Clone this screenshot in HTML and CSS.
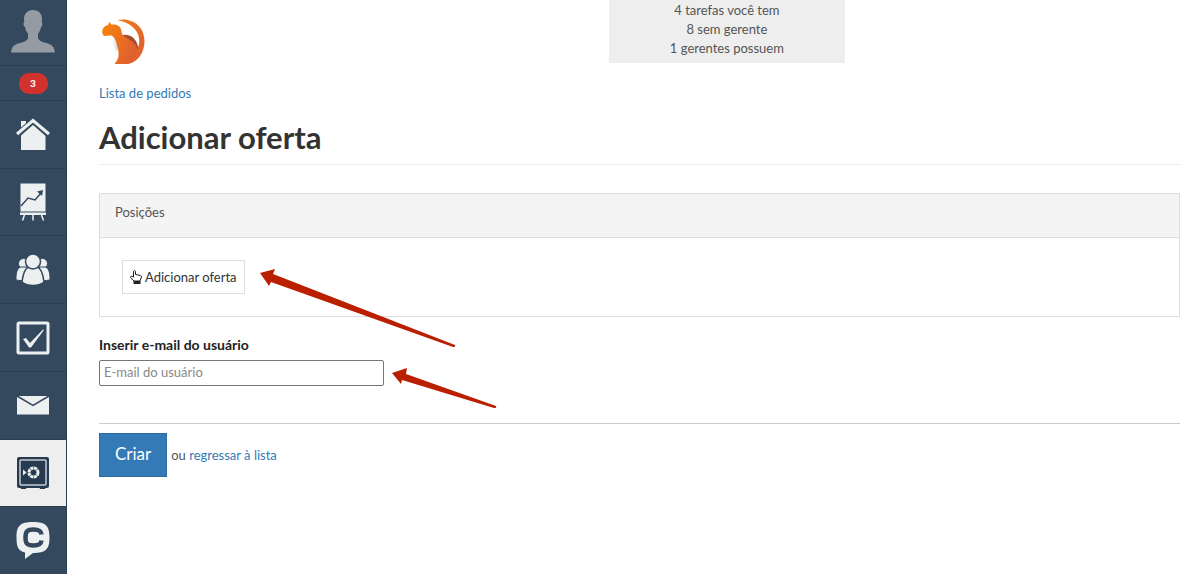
FILE: index.html
```html
<!DOCTYPE html>
<html lang="pt">
<head>
  <meta charset="UTF-8">
  <meta name="viewport" content="width=device-width, initial-scale=1.0">
  <title>Adicionar oferta</title>
  <link rel="stylesheet" href="styles.css">
</head>
<body>
  <nav class="sidebar">
    <a href="#" class="avatar" aria-label="Perfil">
      <svg width="44" height="44" viewBox="0 0 44 44"><path fill="#959ba2" d="M22 0c6 0 9 4 9 9 0 1 0 2-.3 3 1.300 1 1 4-.7 5-.5 3-1.500 5-3 6.500V28c1 3 4 4 8 5 6 1.500 8 3 9 9.500H0C1 36 3 34.500 9 33c4-1 7-2 8-5v-4.500c-1.500-1.500-2.500-3.500-3-6.500-1.700-1-2-4-.7-5-.3-1-.3-2-.3-3 0-5 3-9 9-9z"/></svg>
    </a>
    <a href="#" class="counter"><span class="badge">3</span></a>
    <a href="#" class="item" aria-label="Início">
      <svg width="34" height="34" viewBox="0 0 34 34" fill="#ecf0f1"><path d="M5 4h5v3L5 11z"/><path d="M17 6l12.500 11v16H5V17z"/><path d="M1 18L17 4l16 14" fill="none" stroke="#34495e" stroke-width="6"/><path d="M1 17L17 3.500 33 17" fill="none" stroke="#ecf0f1" stroke-width="3"/></svg>
    </a>
    <a href="#" class="item" aria-label="Estatísticas">
      <svg width="34" height="40" viewBox="0 0 34 40"><path fill="#ecf0f1" d="M4.500 1.500h25v28h-25zM4 30.500h26v2.500H4z"/><path d="M5 24l7-8 7 2 6-7" fill="none" stroke="#34495e" stroke-width="1.500"/><path fill="#34495e" d="M21 9.500l6-1.500-1 6z"/><path d="M8.500 33L6.500 38.500M17 33v5.500M25.500 33l2 5.500" stroke="#ecf0f1" stroke-width="1.500"/></svg>
    </a>
    <a href="#" class="item" aria-label="Clientes">
      <svg width="34" height="34" viewBox="0 0 34 34" fill="#ecf0f1" stroke="#34495e"><circle cx="7.500" cy="10.500" r="5"/><circle cx="26.500" cy="10.500" r="5"/><path d="M0 26c0-6 1-11 5-12h6l-3 14-8-1zM34 26c0-6-1-11-5-12h-6l3 14 8-1z"/><path stroke-width="1.500" d="M6 29c1-8 3-14 7-15h8c4 1 6 7 7 15-6 4.500-16 4.500-22 0z"/><circle cx="17" cy="8.500" r="7.500" stroke-width="1.500"/></svg>
    </a>
    <a href="#" class="item" aria-label="Tarefas">
      <svg width="34" height="34" viewBox="0 0 34 34"><rect x="2" y="2" width="30" height="30" rx="1" fill="none" stroke="#ecf0f1" stroke-width="3"/><path fill="#ecf0f1" d="M7 18l3-1 4 5L27 8.500 28 9 15 26.500h-2z"/></svg>
    </a>
    <a href="#" class="item" aria-label="Mensagens">
      <svg width="34" height="34" viewBox="0 0 34 34"><path fill="#ecf0f1" d="M1 8h32v18.500H1z"/><path d="M1 8l16 9.500L33 8" fill="none" stroke="#34495e" stroke-width="1.500"/></svg>
    </a>
    <a href="#" class="item active" aria-label="Pedidos">
      <svg width="34" height="34" viewBox="0 0 34 34"><path fill="#263a50" d="M4 30h7l-1 3H5zM23 30h7l-1 3h-5z"/><rect x="1" y="1" width="32" height="31" rx="2" fill="#263a50"/><rect x="4" y="4" width="26" height="25" rx="1" fill="none" stroke="#c5ccd2" stroke-width="1.500"/><path fill="#ecf0f1" d="M7 13.500l3.500 3L7 19.500z"/><circle cx="17.500" cy="16.500" r="4.500" fill="none" stroke="#ecf0f1" stroke-width="3" stroke-dasharray="3 0.530"/></svg>
    </a>
    <a href="#" class="item" aria-label="Chat">
      <svg width="34" height="38" viewBox="0 0 34 38"><path fill="#ecf0f1" d="M17 0c13 0 16.500 4 16.500 15.500S30 31 17 31l-8 6v-6.500C2 29 .5 25 .5 15.500.5 4 4 0 17 0z"/><path d="M25.500 12.500c-.5-4-3-5-8-5-6.500 0-8 2-8 8s1.500 8 8 8c5 0 7.500-1 8-5" fill="none" stroke="#34495e" stroke-width="4.500"/></svg>
    </a>
  </nav>

  <main class="content">
    <header class="top">
      <a href="#" class="logo" aria-label="Página inicial">
        <svg width="46" height="46" viewBox="0 0 46 46">
          <defs>
            <linearGradient id="fur" x1="0" y1="0" x2="1" y2="0.500"><stop offset="0" stop-color="#fb8608"/><stop offset="1" stop-color="#df5f31"/></linearGradient>
            <linearGradient id="tail" x1="0" y1="0" x2="1" y2="1"><stop offset="0" stop-color="#f37a17"/><stop offset="1" stop-color="#de5d32"/></linearGradient>
            <linearGradient id="shade"><stop offset="0" stop-color="#fff"/><stop offset="1" stop-color="#ccc"/></linearGradient>
          </defs>
          <path fill="url(#shade)" d="M11 16c0 8 2 14 5 18l3-12z"/>
          <path fill="url(#tail)" d="M16 2C32-1 43.500 9 43.500 23 43.500 36 35 46 25 46l5-10c7-3 9-9 8-16C37 11 28 4 16 2z"/>
          <path fill="#a54a2c" d="M22 17c8-1 14 4 15.500 14L30 32z"/>
          <path fill="url(#fur)" d="M8.500 4l2 2.500c6-.5 9.500 2 10 7 .3 4 3 5 7 7.500 5 3 8.500 6 9 11C36 40 31 46 25 46H13.500c4-5 5-9 3.500-15-1.500-5-2-10-5.500-13-3-1-6 0-8.500 0C1 16 .5 13 2 10.500c1-2 3-3 5-3.500z"/>
        </svg>
      </a>
      <div class="summary">
        <div>4 tarefas você tem</div>
        <div>8 sem gerente</div>
        <div>1 gerentes possuem</div>
      </div>
    </header>

    <a href="#" class="back">Lista de pedidos</a>
    <h1>Adicionar oferta</h1>

    <form>
      <section class="panel">
        <div class="panel-heading">Posições</div>
        <div class="panel-body">
          <div class="pointed">
            <button type="button" class="btn-add">
              <svg width="12" height="14" viewBox="0 0 12 14"><path fill="#fff" stroke="#222" stroke-linejoin="round" d="M3.500 7V1.500c0-1.200 2-1.200 2 0v3l5 1c.8.200 1 .8 1 1.500L10 11H4L.8 8C0 7 1 5.800 2 6.400z"/><path fill="#222" d="M3.500 11h7v3h-7z"/></svg>
              Adicionar oferta
            </button>
            <svg class="arrow" width="196" height="80" viewBox="0 0 196 80"><path fill="#ba2000" d="M0 5l15-4-2 5 182 71q1 2-2 2L11 14l-2 4z"/></svg>
          </div>
        </div>
      </section>

      <label for="email">Inserir e-mail do usuário</label>
      <div class="pointed">
        <input type="email" id="email" placeholder="E-mail do usuário">
        <svg class="arrow" width="105" height="42" viewBox="0 0 105 42"><path fill="#ba2000" d="M0 5l15-5-1 6 90 32q1 2-2 2L10 12l-1 4z"/></svg>
      </div>

      <div class="actions">
        <button type="submit" class="btn-create">Criar</button>
        <span>ou <a href="#">regressar à lista</a></span>
      </div>
    </form>
  </main>
</body>
</html>
```
FILE: styles.css
```css
* {
  box-sizing: border-box;
}

body {
  margin: 0;
  display: flex;
  min-height: 100vh;
  background: #fff;
  color: #555;
  font-family: Lato, "Open Sans", sans-serif;
  font-size: 13px;
  line-height: 19px;
}

a {
  color: #337ab7;
  text-decoration: none;
}

button,
input {
  font: inherit;
}

svg {
  display: block;
}

/* Sidebar */
.sidebar {
  display: flex;
  flex-direction: column;
  width: 67px;
  flex-shrink: 0;
  background: #34495e;
  border-right: 1px solid #2c4057;
}

.sidebar a {
  display: flex;
  align-items: center;
  justify-content: center;
  border-bottom: 1px solid #2b3e50;
}

.sidebar .avatar {
  height: 66px;
  padding-bottom: 2px;
}

.sidebar .counter {
  height: 35px;
}

.badge {
  width: 29px;
  border-radius: 10px;
  background: #d2322d;
  color: #fff;
  font-size: 10px;
  font-weight: 900;
  line-height: 21px;
  text-align: center;
}

.sidebar .item {
  flex: 1;
  max-height: 68px;
}

.sidebar .item:last-child {
  border-bottom: 0;
}

.sidebar .active {
  background: #eee;
}

/* Page */
.content {
  flex: 1;
  padding: 0 20px 0 32px;
}

.top {
  display: flex;
  align-items: flex-start;
  justify-content: space-between;
}

.logo {
  padding: 18px 0 0 2px;
}

.summary {
  width: 236px;
  margin-right: 31%;
  padding: 1px 0 5px;
  background: #eee;
  text-align: center;
}

.back {
  display: block;
  margin-top: 20px;
}

h1 {
  margin: 15px 0 28px;
  padding-bottom: 7px;
  border-bottom: 1px solid #eee;
  color: #333;
  font-size: 31px;
  line-height: 39px;
}

.panel {
  margin-bottom: 18px;
  border: 1px solid #ddd;
}

.panel-heading {
  padding: 9px 15px 15px;
  background: #f4f4f4;
  border-bottom: 1px solid #ddd;
}

.panel-body {
  padding: 22px;
}

/* Control with an arrow beside it */
.pointed {
  position: relative;
  width: fit-content;
}

.arrow {
  position: absolute;
  top: 8px;
  left: 100%;
  margin-left: 8px;
}

.panel .arrow {
  margin-left: 15px;
}

.btn-add {
  display: flex;
  align-items: center;
  gap: 3px;
  height: 34px;
  padding: 0 7px;
  background: #fff;
  border: 1px solid #ddd;
  color: #333;
}

label {
  display: block;
  margin-bottom: 6px;
  color: #222;
  font-size: 14px;
  font-weight: bold;
}

input {
  display: block;
  width: 285px;
  height: 26px;
  padding: 0 4px 2px;
  border: 1px solid #767676;
  border-radius: 2px;
}

input::placeholder {
  color: #888;
}

.actions {
  display: flex;
  align-items: baseline;
  gap: 4px;
  margin-top: 37px;
  padding-top: 9px;
  border-top: 1px solid #ccc;
}

.btn-create {
  height: 44px;
  padding: 0 15px 3px;
  background: #337ab7;
  border: 1px solid #2e6da4;
  color: #fff;
  font-size: 17px;
}
```
